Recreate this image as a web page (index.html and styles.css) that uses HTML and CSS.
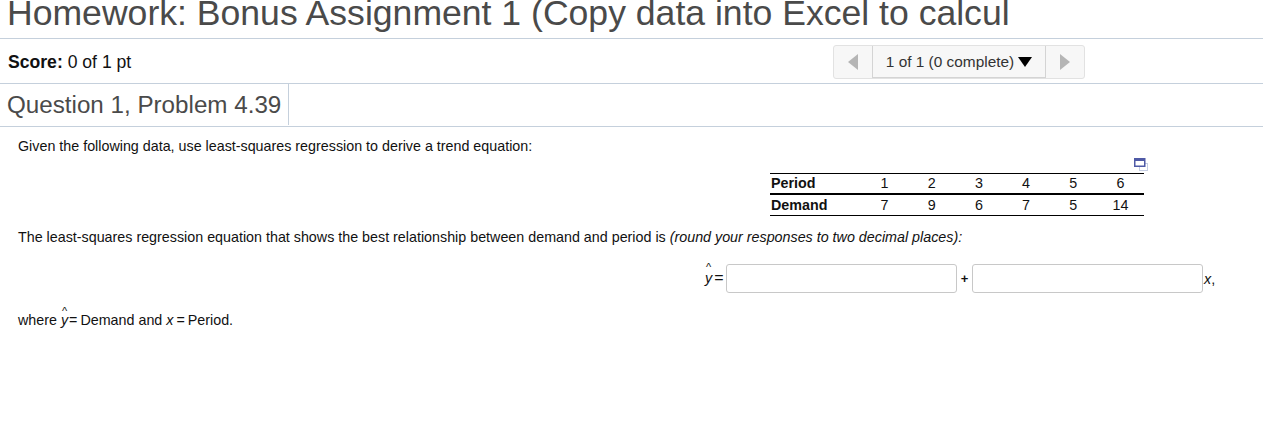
FILE: index.html
```html
<!DOCTYPE html>
<html lang="en">
<head>
    <meta charset="UTF-8">
    <title>Homework: Bonus Assignment 1</title>
    <link rel="stylesheet" href="styles.css">
</head>
<body>
    <div class="title-bar">
        <h1>Homework: Bonus Assignment 1 (Copy data into Excel to calcul</h1>
    </div>
    <div class="score-bar">
        <div class="score"><b>Score:</b> 0 of 1 pt</div>
        <div class="pager">
            <div class="pager-arrow pager-prev"><span class="tri-left"></span></div>
            <div class="pager-label">1 of 1 (0 complete) <span class="tri-down"></span></div>
            <div class="pager-arrow pager-next"><span class="tri-right"></span></div>
        </div>
    </div>
    <div class="question-bar">
        <h2>Question 1, Problem 4.39</h2>
    </div>
    <div class="content">
        <p class="intro">Given the following data, use least-squares regression to derive a trend equation:</p>
        <div class="icon-row">
            <svg class="copy-icon" width="14" height="13" viewBox="0 0 14 13">
                <rect x="5.5" y="5.5" width="8" height="7" fill="#fff" stroke="#c5cde3"/>
                <rect x="0.75" y="0.75" width="10" height="7.5" fill="#fff" stroke="#4f5aa6" stroke-width="1.5"/>
                <rect x="1" y="1" width="9.5" height="2" fill="#4f5aa6"/>
            </svg>
        </div>
        <table class="data-table">
            <tr>
                <th>Period</th><td>1</td><td>2</td><td>3</td><td>4</td><td>5</td><td>6</td>
            </tr>
            <tr>
                <th>Demand</th><td>7</td><td>9</td><td>6</td><td>7</td><td>5</td><td>14</td>
            </tr>
        </table>
        <p class="prompt">The least-squares regression equation that shows the best relationship between demand and period is <i>(round your responses to two decimal places):</i></p>
        <div class="equation">
            <div class="lead"><span class="yhat"><i>y</i></span><span class="lead-eq">=</span></div>
            <input class="answer" type="text">
            <span class="plus">+</span>
            <input class="answer" type="text">
            <span class="var"><i>x</i>,</span>
        </div>
        <p class="where">where <span class="yhat"><i>y</i></span><span class="eq">=</span>Demand and <i class="where-x">x</i><span class="eq">=</span>Period.</p>
    </div>
</body>
</html>
```

FILE: styles.css
```css
body {
    margin: 0;
    font-family: "Liberation Sans", Arial, sans-serif;
    font-size: 14.3px;
    color: #111;
    background: #fff;
    overflow: hidden;
}
.title-bar {
    height: 38px;
    border-bottom: 1px solid #c5d0dc;
    overflow: hidden;
}
h1 {
    margin: -7px 0 0 7px;
    font-size: 35.6px;
    line-height: 40px;
    font-weight: normal;
    color: #4a4a4a;
    white-space: nowrap;
}
.score-bar {
    height: 44px;
    border-bottom: 1px solid #c5d0dc;
    display: flex;
    align-items: center;
    justify-content: space-between;
    padding: 0 178px 0 8px;
}
.score {
    font-size: 17.6px;
    margin-top: 2px;
}
.pager {
    display: flex;
    height: 34px;
    margin-top: 2px;
    border: 1px solid #e2e2e2;
    border-radius: 3px;
    background: #f7f7f7;
    box-sizing: border-box;
}
.pager-arrow {
    width: 38px;
    display: flex;
    align-items: center;
    justify-content: center;
}
.pager-label {
    width: 174px;
    box-sizing: border-box;
    border: 1px solid #d4d4d4;
    border-top: 0;
    font-size: 15.4px;
    color: #333;
    display: flex;
    align-items: center;
    justify-content: center;
    gap: 4px;
}
.tri-left, .tri-right, .tri-down {
    display: block;
    width: 0;
    height: 0;
}
.tri-left {
    border-top: 8px solid transparent;
    border-bottom: 8px solid transparent;
    border-right: 10px solid #b5b5b5;
}
.tri-right {
    border-top: 8px solid transparent;
    border-bottom: 8px solid transparent;
    border-left: 10px solid #b5b5b5;
}
.tri-down {
    border-left: 7px solid transparent;
    border-right: 7px solid transparent;
    border-top: 10px solid #000;
}
.question-bar {
    height: 42px;
    border-bottom: 1px solid #c5d0dc;
}
h2 {
    display: inline-block;
    margin: 0;
    height: 41px;
    padding: 0 7px 0 7px;
    border-right: 1px solid #c5d0dc;
    font-size: 24.2px;
    line-height: 42px;
    font-weight: normal;
    color: #4a4a4a;
    box-sizing: border-box;
}
.content {
    padding: 0 18px;
}
.intro {
    margin: 11px 0 0;
    line-height: 16px;
}
.icon-row {
    height: 14px;
    display: flex;
    justify-content: flex-end;
    padding-right: 97px;
}
.copy-icon {
    display: block;
    margin-top: 4px;
    flex: none;
}
.data-table {
    border-collapse: collapse;
    margin: 5px 101px 0 auto;
    width: 374px;
    table-layout: fixed;
    border-top: 1px solid #000;
    border-bottom: 1px solid #000;
    line-height: 16px;
}
.data-table th {
    width: 90px;
    text-align: left;
    padding: 0 0 1px 1px;
    height: 19px;
}
.data-table td {
    text-align: center;
    padding: 0 0 1px;
    height: 19px;
}
.data-table tr:first-child th, .data-table tr:first-child td {
    height: 18px;
    border-bottom: 2px solid #000;
}
.prompt {
    margin: 13px 0 0;
    line-height: 16px;
}
.equation {
    display: flex;
    align-items: center;
    margin: 19px 0 0 687px;
    height: 29px;
}
.lead {
    width: 21px;
    margin-bottom: 2px;
    white-space: nowrap;
}
.lead-eq {
    margin-left: 2px;
    font-size: 16px;
}
.answer {
    width: 231px;
    height: 29px;
    box-sizing: border-box;
    border: 1px solid #c8c8c8;
    border-radius: 3px;
    margin: 0;
    padding: 0;
    background: #fff;
}
.plus {
    width: 15px;
    text-align: center;
    font-weight: bold;
    font-size: 13px;
}
.var {
    margin-left: 1px;
}
.yhat {
    position: relative;
    display: inline-block;
}
.yhat::before {
    content: "^";
    position: absolute;
    top: -9px;
    left: 1px;
    font-size: 11px;
}
.eq {
    margin: 0 3px 0 1px;
}
.where-x {
    margin-right: 2px;
}
.where {
    margin: 19px 0 0;
    line-height: 16px;
}
```
